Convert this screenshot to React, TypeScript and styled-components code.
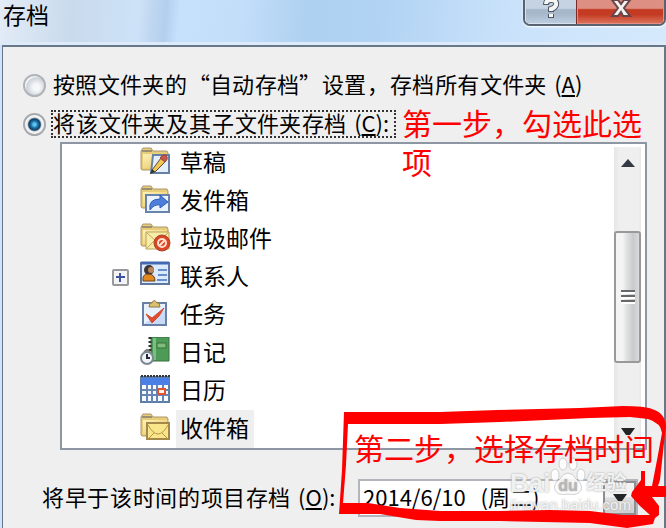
import React from "react";
import styled, { createGlobalStyle, css } from "styled-components";

const GlobalStyle = createGlobalStyle`
  *, *::before, *::after { box-sizing: border-box; }
  body {
    margin: 0;
    background: #cfe4fb;
    color: #000;
    font-family: "Noto Sans CJK SC", "Liberation Sans", sans-serif;
    font-size: 22px;
    line-height: 28px;
  }
`;

const Window = styled.div`
  position: relative;
  display: flex;
  flex-direction: column;
  min-height: 100vh;
  overflow: hidden;
`;

const TitleBar = styled.header`
  display: flex;
  justify-content: space-between;
  align-items: flex-start;
  height: 45px;
  padding-left: 3px;
  background: linear-gradient(
    95deg,
    #e3ecf7 0%, #c9daec 11%, #cde2f8 21%, #bfd6f0 23%, #b3cfee 25%,
    #c6e1fc 27%, #c3def9 36%, #afd1f1 46%, #b0d2f3 56%, #c9e2fa 76%, #d6e9fc 100%
  );
  border-bottom: 3px solid #dceafa;
`;

const Title = styled.h1`
  margin: 0;
  font-size: 23px;
  font-weight: 400;
  line-height: 28px;
`;

const Caption = styled.div`
  display: flex;
  height: 26px;
  border: 2px solid #59626f;
  border-top: 0;
  border-radius: 0 0 7px 7px;
  overflow: hidden;
  box-shadow: 0 1px 2px #fff;
`;

const CaptionButton = styled.button<{ $close?: boolean }>`
  display: grid;
  place-items: start center;
  width: ${(p) => (p.$close ? 87 : 52)}px;
  height: 24px;
  padding: 0;
  border: 1px solid ${(p) => (p.$close ? "#e58d83" : "#d8e2ee")};
  border-top: 0;
  background: ${(p) =>
    p.$close
      ? "linear-gradient(#dc8f82 0 36%, #c43a22 42% 62%, #d97057 100%)"
      : "linear-gradient(#c5d3e3 0 36%, #a6b7ca 42% 60%, #bccddf 100%)"};
  ${(p) => p.$close && css`box-shadow: -1px 0 #7b2a2a;`}
`;

const Body = styled.main`
  flex: 1;
  margin: 0 0 0 2px;
  padding: 24px 17px 10px 20px;
  background: #efefef;
  border: solid #67788b;
  border-width: 2px 2px 0 1px;
`;

const Option = styled.label`
  display: flex;
  align-items: center;
  height: 28px;
  margin-bottom: 11px;
  white-space: nowrap;
`;

const Radio = styled.input`
  appearance: none;
  flex: none;
  width: 23px;
  height: 23px;
  margin: 0 5px 0 0;
  border: 2px solid #b0b3b7;
  border-radius: 50%;
  background: radial-gradient(circle at 60% 60%, #f5f7f9 0 20%, #cbd2d9 60%, #f8f8f8 68%);
  &:checked {
    border-color: #a6a9ad;
    background: radial-gradient(circle at 50% 50%, #60c4ee 0 10%, #1d78ad 24%, #123c60 42%, #e8eaed 54%, #fff 70%);
  }
`;

const Phrase = styled.span<{ $focused?: boolean }>`
  display: flex;
  gap: 1px;
  height: 28px;
  line-height: 20px;
  border: ${(p) => (p.$focused ? "2px dotted #333" : "2px solid transparent")};
  ${(p) => p.$focused && css`padding-right: 5px;`}
`;

const Hotkey = styled.span`
  margin-left: 7px;
`;

const ListBox = styled.div`
  display: flex;
  justify-content: space-between;
  margin: -7px 0 29px 37px;
  background: #fff;
  border: 2px solid #8d97a3;
`;

const Tree = styled.ul`
  margin: 0;
  padding: 0 0 0 50px;
  list-style: none;
`;

const Row = styled.li`
  display: grid;
  grid-template-columns: 28px 36px auto;
  align-items: center;
  justify-content: start;
  height: 38px;
  svg { display: block; }
`;

const RowLabel = styled.span<{ $selected?: boolean }>`
  height: 38px;
  padding: 0 5px 0 4px;
  font-size: 23px;
  line-height: 34px;
  background: ${(p) => (p.$selected ? "#efefef" : "transparent")};
`;

const Expander = styled.button`
  display: grid;
  place-items: center;
  width: 17px;
  height: 17px;
  padding: 0;
  border: 2px solid #97999d;
  border-radius: 2px;
  background: #f4f4f4;
`;

const ScrollBar = styled.div`
  display: flex;
  flex-direction: column;
  width: 27px;
  margin: 3px 4px 0 0;
  background: linear-gradient(90deg, #e6e6e6, #efefef 20% 90%, #e8e8e8);
`;

const ScrollButton = styled.button`
  display: grid;
  place-items: center;
  flex: none;
  height: 32px;
  padding: 0;
  border: 0;
  background: transparent;
`;

const Track = styled.div`
  flex: 1;
  padding-top: 52px;
`;

const Thumb = styled.div`
  display: grid;
  place-items: center;
  height: 132px;
  border: 2px solid #999;
  border-radius: 3px;
  background: linear-gradient(90deg, #f4f4f4 0 30%, #e2e2e3 45%, #c8cacd 75%, #d9dadc 100%);
`;

const DateRow = styled.div`
  display: flex;
  align-items: center;
  height: 38px;
  padding: 0 9px 0 19px;
  white-space: nowrap;
`;

const DateLabel = styled.label`
  display: flex;
  gap: 1px;
  width: 316px;
  flex: none;
  padding-bottom: 4px;
`;

const ComboBox = styled.div`
  display: grid;
  flex: 1;
  grid-template-columns: 1fr 33px;
  align-items: stretch;
  height: 38px;
  border: 2px solid #b2b5bb;
  background: #fff;
`;

const DateSelect = styled.select`
  appearance: none;
  grid-area: 1 / 1 / 2 / 3;
  width: 100%;
  padding: 0 0 4px 3px;
  border: 0;
  background: transparent;
  color: #000;
  font: inherit;
`;

const DropArrow = styled.span`
  grid-area: 1 / 2;
  display: grid;
  place-items: center;
  border: 2px solid #8e8e90;
  background: linear-gradient(#f3f3f3 0 45%, #dedede 50%, #cfcfcf);
  pointer-events: none;
`;

const Note = styled.p`
  position: absolute;
  margin: 0;
  color: #f00;
  font-size: 30px;
  line-height: 39px;
`;

const FirstNote = styled(Note)`
  top: 103px;
  left: 402px;
  width: 245px;
`;

const SecondNote = styled(Note)`
  top: 428px;
  right: 12px;
  white-space: nowrap;
`;

const Scribble = styled.svg`
  position: absolute;
  top: 400px;
  right: 0;
  pointer-events: none;
`;

const Watermark = styled.div`
  position: absolute;
  top: 456px;
  right: 36px;
  width: 120px;
  color: rgba(255, 255, 255, 0.85);
  font-family: "Liberation Sans", "Noto Sans CJK SC", sans-serif;
  text-shadow: 0 0 2px #999;
  pointer-events: none;
`;

const Brand = styled.div`
  display: flex;
  align-items: flex-end;
  height: 40px;
  font-size: 26px;
  font-weight: 700;
  line-height: 26px;
`;

const BrandSuffix = styled.span`
  font-size: 20px;
  white-space: nowrap;
`;

const Site = styled.div`
  font-size: 15px;
  line-height: 18px;
  white-space: nowrap;
`;

const FolderShape = () => (
  <g>
    <path d="M1 4 L3 1 H11 L13 4 H27 L28 6 V23 H2 L1 22Z" fill="#e8cd78" stroke="#aa9670" />
    <path d="M2 4 H12" stroke="#9c8f72" strokeWidth="2" />
    <path d="M3 7 H27 V21 H3Z" fill="url(#folderFill)" />
  </g>
);

type IconName = "drafts" | "outbox" | "junk" | "contacts" | "tasks" | "journal" | "calendar" | "inbox";

const drawings: Record<IconName, React.ReactNode> = {
  drafts: (
    <>
      <FolderShape />
      <path d="M13 8 H29 V26 H11Z" fill="#e5effb" stroke="#6780a6" strokeWidth="2" />
      <path d="M12 23 L21 11 L26 14 L15 25Z" fill="#f2c455" stroke="#5c4c32" />
      <path d="M20 11 Q22 7 26 8 Q29 12 25 15Z" fill="#c95549" stroke="#8f4a3d" />
      <path d="M10 27 L12 22 L15 25Z" fill="#333" />
    </>
  ),
  outbox: (
    <>
      <FolderShape />
      <path d="M6 10 H29 V27 H6Z" fill="#e9f2fd" stroke="#6884ad" strokeWidth="2" />
      <path d="M10 25 Q8 14 20 14 V10 L28 17 L20 23 V20 Q14 19 10 25Z" fill="#4d7edc" stroke="#315fb8" />
    </>
  ),
  junk: (
    <>
      <FolderShape />
      <path d="M6 9 H29 V26 H6Z" fill="#f8eda8" stroke="#b9a15d" />
      <path d="M7 10 L17 19 L28 10 M7 25 L14 18" fill="none" stroke="#c1a75c" />
      <circle cx="22" cy="20" r="8" fill="#dc4425" stroke="#a9472e" />
      <circle cx="22" cy="20" r="4" fill="none" stroke="#ffe1cf" strokeWidth="2" />
      <path d="M19 23 L25 17" stroke="#ffe1cf" strokeWidth="2" />
    </>
  ),
  contacts: (
    <>
      <path d="M1 2 H29 V23 H1Z" fill="#dceafd" stroke="#5f779d" strokeWidth="2" />
      <path d="M1 2 H29" stroke="#4269b1" strokeWidth="3" />
      <circle cx="9" cy="9" r="5" fill="#3d3433" />
      <circle cx="11" cy="9" r="3" fill="#bc865a" />
      <path d="M3 20 Q2 13 8 13 Q15 13 15 20Z" fill="#df8920" stroke="#714315" />
      <path d="M18 9 H27 M18 14 H27 M17 19 H27" stroke="#668dcc" strokeWidth="2" />
    </>
  ),
  tasks: (
    <>
      <path d="M3 4 H26 V26 H3Z" fill="#e8f1ff" stroke="#687fa7" strokeWidth="2" />
      <path d="M4 25 L25 11 V25Z" fill="#c8daf5" />
      <path d="M9 8 L10 4 H12 Q14 -1 17 4 H19 L20 8Z" fill="#dcc16c" stroke="#8c784d" />
      <path d="M6 15 L12 19 L24 9 L19 17 L12 24Z" fill="#e44b2e" stroke="#ce4b32" />
    </>
  ),
  journal: (
    <>
      <path d="M11 0 H29 V24 H11Z" fill="#4e9a57" stroke="#386e40" />
      <path d="M13 1 H16 V23 H13Z" fill="#7dbd80" />
      <path d="M17 6 H26 V11 H17Z" fill="#80bb7b" stroke="#35713d" />
      <path d="M10 0 V16" stroke="#333" strokeWidth="3" strokeDasharray="2 2" />
      <path d="M4 15 L7 13 L10 15" fill="none" stroke="#777" strokeWidth="2" />
      <circle cx="7" cy="21" r="6" fill="#f0f4f8" stroke="#7c8792" strokeWidth="2" />
      <path d="M7 17 V21 H10" fill="none" stroke="#202a35" strokeWidth="2" />
    </>
  ),
  calendar: (
    <>
      <path d="M1 2 H29 V27 H1Z" fill="#f7fbff" stroke="#5d7da9" strokeWidth="2" />
      <path d="M1 3 H29 V10 H1Z" fill="#4c7fe5" />
      <path d="M1 1 H30" stroke="#333" strokeWidth="2" strokeDasharray="2 1" />
      <path d="M2 15 H29 M2 20 H29 M7 10 V27 M12 10 V27 M17 10 V27 M23 10 V27" stroke="#6785b5" strokeWidth="2" />
      <path d="M18 14 H25 V19 H18Z" fill="#fff3ec" stroke="#e3542c" strokeWidth="2" />
    </>
  ),
  inbox: (
    <>
      <FolderShape />
      <path d="M7 10 H29 V26 H7Z" fill="#f9e68a" stroke="#a3874b" strokeWidth="2" />
      <path d="M8 12 Q18 30 28 12 M8 26 L14 20 M28 26 L22 20" fill="none" stroke="#b89545" />
    </>
  ),
};

const FolderIcon = ({ name }: { name: IconName }) => (
  <svg width="31" height="32" viewBox="0 0 31 32" aria-hidden="true">
    <defs>
      <linearGradient id="folderFill" x2="1" y2="1">
        <stop stopColor="#fff2b6" />
        <stop offset="1" stopColor="#e5c25f" />
      </linearGradient>
    </defs>
    {drawings[name]}
  </svg>
);

const folders: { name: string; icon: IconName; expandable?: boolean; selected?: boolean }[] = [
  { name: "草稿", icon: "drafts" },
  { name: "发件箱", icon: "outbox" },
  { name: "垃圾邮件", icon: "junk" },
  { name: "联系人", icon: "contacts", expandable: true },
  { name: "任务", icon: "tasks" },
  { name: "日记", icon: "journal" },
  { name: "日历", icon: "calendar" },
  { name: "收件箱", icon: "inbox", selected: true },
];

const allFolders = ["按照", "文件夹", "的", "“自动", "存档”", "设置", "\uFF0C", "存档", "所有", "文件夹"];
const thisFolder = ["将", "该", "文件夹", "及", "其", "子", "文件夹", "存档"];
const olderThan = ["将", "早于", "该", "时间", "的", "项目", "存档"];

const Words = ({ words }: { words: string[] }) => (
  <>
    {words.map((word, i) => (
      <span key={i}>{word}</span>
    ))}
  </>
);

const Arrow = ({ up }: { up?: boolean }) => (
  <svg width="14" height="8" viewBox="0 0 14 8" aria-hidden="true">
    <path d={up ? "M0 8 L7 0 L14 8Z" : "M0 0 H14 L9 7 H5Z"} fill={up ? "#333a42" : "#222426"} />
  </svg>
);

export default function App() {
  return (
    <>
      <GlobalStyle />
      <Window lang="zh-CN">
        <TitleBar>
          <Title>存档</Title>
          <Caption>
            <CaptionButton aria-label="帮助">
              <svg width="18" height="20" viewBox="0 0 18 20" aria-hidden="true">
                <path d="M4 5 Q4 0 9 0 Q15 0 14 5 Q13 8 9 9 V12 M9 14 V18" fill="none" stroke="#4d5665" strokeWidth="6" />
                <path d="M4 4 Q4 0 9 0 Q15 0 14 5 Q13 8 9 9 V11 M9 14 V17" fill="none" stroke="#f5f5f5" strokeWidth="4" />
              </svg>
            </CaptionButton>
            <CaptionButton $close aria-label="关闭">
              <svg width="22" height="18" viewBox="0 0 22 18" aria-hidden="true">
                <path
                  d="M2 0 H8 L11 4 L14 0 H20 L14 8 L20 16 H13 L11 12 L8 16 H2 L8 8Z"
                  fill="#f5f3f2"
                  stroke="#66464a"
                  strokeWidth="2"
                />
              </svg>
            </CaptionButton>
          </Caption>
        </TitleBar>

        <Body>
          <Option>
            <Radio type="radio" name="scope" />
            <Phrase>
              <Words words={allFolders} />
              <Hotkey>(<u>A</u>)</Hotkey>
            </Phrase>
          </Option>
          <Option>
            <Radio type="radio" name="scope" defaultChecked />
            <Phrase $focused>
              <Words words={thisFolder} />
              <Hotkey>(<u>C</u>):</Hotkey>
            </Phrase>
          </Option>

          <ListBox>
            <Tree role="tree">
              {folders.map((f) => (
                <Row key={f.name} role="treeitem" aria-selected={!!f.selected}>
                  <span>
                    {f.expandable && (
                      <Expander aria-label={`展开${f.name}`}>
                        <svg width="9" height="9" viewBox="0 0 9 9" aria-hidden="true">
                          <path d="M0 4 H9 M4 0 V9" stroke="#4050a5" strokeWidth="2" />
                        </svg>
                      </Expander>
                    )}
                  </span>
                  <FolderIcon name={f.icon} />
                  <RowLabel $selected={f.selected}>{f.name}</RowLabel>
                </Row>
              ))}
            </Tree>
            <ScrollBar>
              <ScrollButton aria-label="向上滚动"><Arrow up /></ScrollButton>
              <Track>
                <Thumb>
                  <svg width="14" height="16" viewBox="0 0 14 16" aria-hidden="true">
                    <path d="M0 2 H14 M0 7 H14 M0 12 H14" stroke="#686868" strokeWidth="2" />
                    <path d="M0 4 H14 M0 9 H14 M0 14 H14" stroke="#fff" strokeWidth="2" />
                  </svg>
                </Thumb>
              </Track>
              <ScrollButton aria-label="向下滚动"><Arrow /></ScrollButton>
            </ScrollBar>
          </ListBox>

          <DateRow>
            <DateLabel htmlFor="before">
              <Words words={olderThan} />
              <Hotkey>(<u>O</u>):</Hotkey>
            </DateLabel>
            <ComboBox>
              <DateSelect id="before">
                <option>{"2014/6/10\u00a0\u00a0\u00a0(周二)"}</option>
              </DateSelect>
              <DropArrow><Arrow /></DropArrow>
            </ComboBox>
          </DateRow>
        </Body>

        <Watermark>
          <Brand>
            <span>Bai</span>
            <svg width="36" height="40" viewBox="0 0 36 40" aria-hidden="true">
              <g fill="#fff" fillOpacity="0.85" stroke="#bbb" strokeOpacity="0.7">
                <ellipse cx="5" cy="19" rx="4" ry="6" />
                <ellipse cx="13" cy="8" rx="4" ry="6" />
                <ellipse cx="23" cy="8" rx="4" ry="6" />
                <ellipse cx="31" cy="19" rx="4" ry="6" />
                <path d="M18 17 Q23 17 26 23 Q33 28 31 34 Q28 40 18 38 Q8 40 5 34 Q3 28 10 23 Q13 17 18 17Z" />
              </g>
              <text x="18" y="35" textAnchor="middle" fontSize="16" fontWeight="700" fill="#b8b8b8">du</text>
            </svg>
            <BrandSuffix>经验</BrandSuffix>
          </Brand>
          <Site>jingyan.baidu.com</Site>
        </Watermark>

        <FirstNote>第一步{"\uFF0C"}勾选此选项</FirstNote>
        <SecondNote>第二步{"\uFF0C"}选择存档时间</SecondNote>
        <Scribble width="328" height="128" viewBox="338 400 328 128" aria-hidden="true">
          <path
            fill="#f00"
            fillRule="evenodd"
            d="M344 412 L440 412 L497 410 L580 408 L623 406 Q645 406 652 409 Q665 413 666 426 L664 443 L660 480 L658 486 H666 V497 H652 L659 506 L659 515 L655 518 L653 524 L627 528 L590 523 L500 521 L440 521 L416 520 L380 514 L339 514 L342 470Z
               M348 424 L346 465 L343 503 L368 503 L400 508 L440 511 L500 511 L550 510 L590 511 L623 515 L650 515 L640 506 L631 496 L632 492 L641 480 L641 471 H645 V486 H652 L657 460 L662 433 Q661 423 648 419 L630 417 L590 418 L500 422 L440 424Z"
          />
        </Scribble>
      </Window>
    </>
  );
}
